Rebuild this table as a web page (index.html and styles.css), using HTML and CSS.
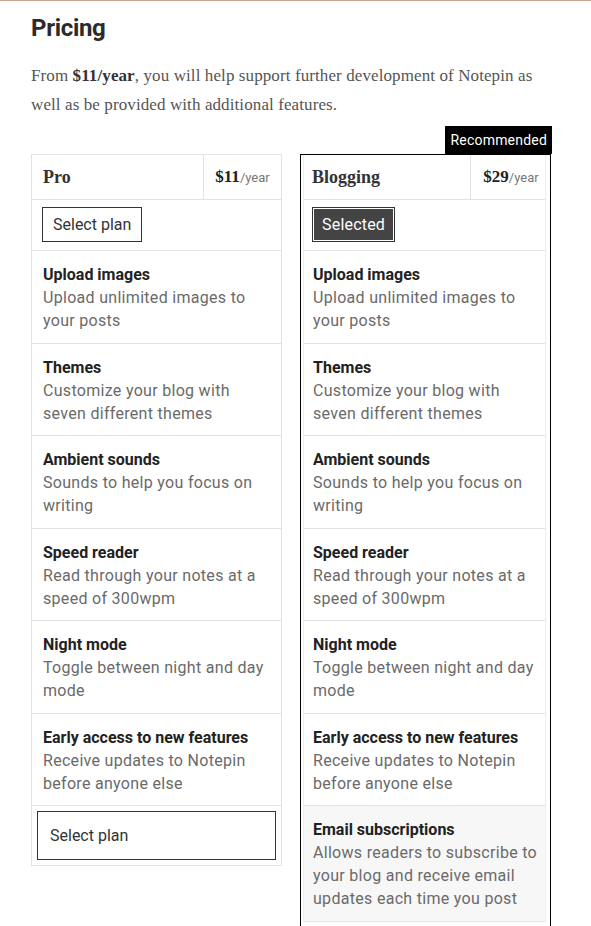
FILE: index.html
```html
<!DOCTYPE html>
<html lang="en">

<head>
  <meta charset="UTF-8">
  <meta name="viewport" content="width=device-width, initial-scale=1.0">
  <title>Notepin - Pricing</title>
  <link rel="stylesheet" href="styles.css">
</head>

<body>
  <div class="page">
    <h1>Pricing</h1>
    <p class="intro">From <b>$11/year</b>, you will help support further development of Notepin as well as be provided with additional features.</p>

    <div class="plans">
      <div class="plan">
        <div class="plan-label-space"></div>
        <div class="plan-box">
          <div class="plan-head">
            <div class="plan-name">Pro</div>
            <div class="plan-price"><b>$11</b><span>/year</span></div>
          </div>
          <div class="plan-row">
            <button class="btn">Select plan</button>
          </div>
          <div class="feature">
            <strong>Upload images</strong>
            <span>Upload unlimited images to your posts</span>
          </div>
          <div class="feature">
            <strong>Themes</strong>
            <span>Customize your blog with seven different themes</span>
          </div>
          <div class="feature">
            <strong>Ambient sounds</strong>
            <span>Sounds to help you focus on writing</span>
          </div>
          <div class="feature">
            <strong>Speed reader</strong>
            <span>Read through your notes at a speed of 300wpm</span>
          </div>
          <div class="feature">
            <strong>Night mode</strong>
            <span>Toggle between night and day mode</span>
          </div>
          <div class="feature">
            <strong>Early access to new features</strong>
            <span>Receive updates to Notepin before anyone else</span>
          </div>
          <div class="plan-foot">
            <button class="btn btn-wide">Select plan</button>
          </div>
        </div>
      </div>

      <div class="plan plan-featured">
        <div class="plan-label-space">
          <span class="plan-label">Recommended</span>
        </div>
        <div class="plan-box">
          <div class="plan-inner">
            <div class="plan-head">
              <div class="plan-name">Blogging</div>
              <div class="plan-price"><b>$29</b><span>/year</span></div>
            </div>
            <div class="plan-row">
              <button class="btn btn-selected">Selected</button>
            </div>
            <div class="feature">
              <strong>Upload images</strong>
              <span>Upload unlimited images to your posts</span>
            </div>
            <div class="feature">
              <strong>Themes</strong>
              <span>Customize your blog with seven different themes</span>
            </div>
            <div class="feature">
              <strong>Ambient sounds</strong>
              <span>Sounds to help you focus on writing</span>
            </div>
            <div class="feature">
              <strong>Speed reader</strong>
              <span>Read through your notes at a speed of 300wpm</span>
            </div>
            <div class="feature">
              <strong>Night mode</strong>
              <span>Toggle between night and day mode</span>
            </div>
            <div class="feature">
              <strong>Early access to new features</strong>
              <span>Receive updates to Notepin before anyone else</span>
            </div>
            <div class="feature feature-extra">
              <strong>Email subscriptions</strong>
              <span>Allows readers to subscribe to your blog and receive email updates each time you post</span>
            </div>
          </div>
        </div>
      </div>
    </div>
  </div>
</body>

</html>
```

FILE: styles.css
```css
*,
*::before,
*::after {
  margin: 0;
  padding: 0;
  box-sizing: border-box;
}
html, body {
  height: 100%;
  overflow: hidden;
}
body {
  border-top: 1px solid #c9a690;
  background: #fff;
  font-family: Roboto, "Liberation Sans", sans-serif;
  color: #333;
}
.page {
  width: 520px;
  margin-left: 31px;
}
h1 {
  margin-top: 13px;
  font-size: 24px;
  line-height: 28px;
  font-weight: 700;
  color: #2b2b2b;
  letter-spacing: -0.3px;
}
.intro {
  margin-top: 19px;
  font-family: "Liberation Serif", serif;
  font-size: 17px;
  letter-spacing: 0.1px;
  line-height: 29px;
  color: #555;
}
.intro b {
  color: #333;
}
.plans {
  display: grid;
  grid-template-columns: 251px 251px;
  column-gap: 18px;
  margin-top: 7px;
  align-items: start;
}
.plan-label-space {
  height: 28px;
  display: flex;
  justify-content: flex-end;
}
.plan-label {
  background: #000;
  color: #fff;
  font-size: 14px;
  letter-spacing: 0.2px;
  line-height: 28px;
  padding: 0 5px 0 6px;
  margin-right: -1px;
}
.plan-box {
  border: 1px solid #e3e3e3;
}
.plan-featured .plan-box {
  border-color: #000;
  padding: 0 4px 0 2px;
  height: 800px;
}
.plan-inner {
  border-left: 1px solid #eee;
  border-right: 1px solid #eee;
}
.plan-head {
  display: flex;
  height: 45px;
  border-bottom: 1px solid #e3e3e3;
}
.plan-name {
  flex: 1;
  display: flex;
  align-items: center;
  padding-left: 11px;
  font-family: "Liberation Serif", serif;
  font-weight: 700;
  font-size: 18px;
  color: #333;
}
.plan-featured .plan-name {
  padding-left: 8px;
}
.plan-price {
  width: 78px;
  display: flex;
  align-items: center;
  justify-content: center;
  border-left: 1px solid #e3e3e3;
  font-family: "Liberation Serif", serif;
  font-size: 17px;
  color: #222;
}
.plan-featured .plan-price {
  width: 75px;
  padding-left: 6px;
}
.plan-price span {
  font-family: Roboto, sans-serif;
  font-size: 13px;
  color: #777;
}
.plan-row {
  height: 51px;
  padding: 7px 10px;
  border-bottom: 1px solid #e3e3e3;
}
.plan-featured .plan-row {
  padding-left: 8px;
}
.btn {
  height: 35px;
  padding: 0 10px;
  background: #fff;
  border: 1px solid #333;
  font-family: Roboto, sans-serif;
  font-size: 16px;
  color: #333;
  cursor: pointer;
}
.btn-selected {
  background: #444;
  color: #fff;
  border: 1px solid #fff;
  outline: 1px solid #333;
  height: 33px;
  margin: 1px;
  padding: 0 8px;
  letter-spacing: 0.2px;
}
.btn-wide {
  width: 100%;
  height: 49px;
  text-align: left;
  padding: 0 12px;
}
.plan-foot {
  padding: 5px 5px 5px;
}
.feature {
  padding: 12px 11px 10.5px;
  border-bottom: 1px solid #e3e3e3;
  font-size: 16px;
  line-height: 23px;
}
.plan-featured .feature {
  padding: 12px 2px 10.5px 9px;
}
.feature strong {
  display: block;
  font-weight: 700;
  color: #222;
}
.feature span {
  display: block;
  color: #6a6a6a;
  letter-spacing: 0.3px;
}
.feature-extra {
  background: #f7f7f7;
}
```
